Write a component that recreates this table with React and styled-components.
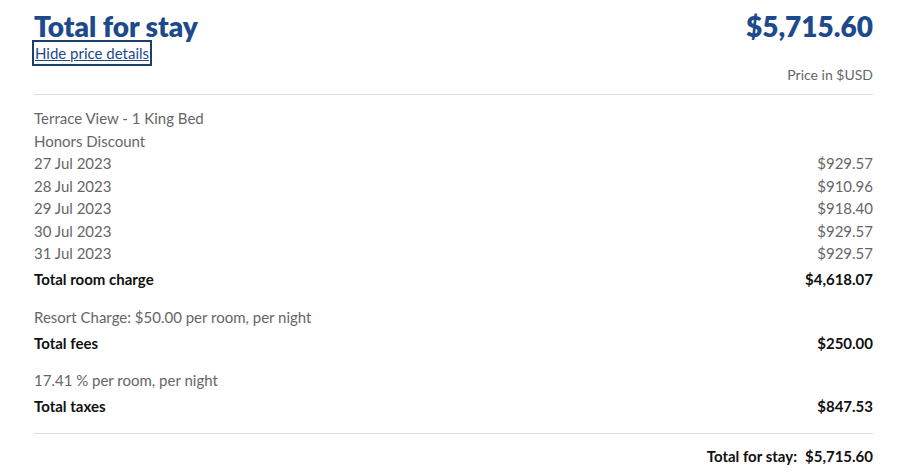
import styled, { createGlobalStyle } from "styled-components";

const GlobalStyle = createGlobalStyle`
  body {
    margin: 0;
    background: #fff;
    font-family: "Lato", "Liberation Sans", sans-serif;
  }
`

const Page = styled.div`
  padding: 13px 25px 0 34px;
`

const Header = styled.div`
  display: flex;
  justify-content: space-between;
  align-items: flex-start;
`

const Title = styled.h1`
  margin: 0;
  font-size: 28px;
  line-height: 27px;
  font-weight: 800;
  color: #1d4a8c;
`

const Amount = styled(Title)`
  text-align: right;
`

const HideLink = styled.a`
  display: inline-block;
  margin-left: -2px;
  padding: 1px 1px;
  border: 2px solid #1d3f6e;
  color: #1d4a8c;
  font-size: 15px;
  line-height: 20px;
  text-decoration: underline;
  cursor: pointer;
`

const Currency = styled.div`
  text-align: right;
  color: #666;
  font-size: 14px;
  line-height: 20px;
  margin-top: -1px;
`

const Divider = styled.hr`
  margin: ${(p) => p.$top}px 0 ${(p) => p.$bottom}px;
  border: none;
  border-top: 1px solid #ddd;
`

const Section = styled.div`
  margin-bottom: 15px;
`

const Row = styled.div`
  display: flex;
  justify-content: space-between;
  font-size: 15px;
  line-height: 22.5px;
  color: ${(p) => (p.$bold ? "#111" : "#666")};
  font-weight: ${(p) => (p.$bold ? 700 : 400)};
  margin-top: ${(p) => (p.$bold ? 3.5 : 0)}px;
`

const Footer = styled.div`
  display: flex;
  justify-content: flex-end;
  gap: 8px;
  font-size: 15px;
  line-height: 22px;
  font-weight: 700;
  color: #111;
`

const nights = [
  ["27 Jul 2023", "$929.57"],
  ["28 Jul 2023", "$910.96"],
  ["29 Jul 2023", "$918.40"],
  ["30 Jul 2023", "$929.57"],
  ["31 Jul 2023", "$929.57"],
]

export default function App() {
  return (
    <Page>
      <GlobalStyle />
      <Header>
        <div>
          <Title>Total for stay</Title>
          <HideLink>Hide price details</HideLink>
        </div>
        <Amount>$5,715.60</Amount>
      </Header>
      <Currency>Price in $USD</Currency>
      <Divider $top={9} $bottom={12} />
      <Section>
        <Row><span>Terrace View - 1 King Bed</span></Row>
        <Row><span>Honors Discount</span></Row>
        {nights.map(([d, p]) => (
          <Row key={d}><span>{d}</span><span>{p}</span></Row>
        ))}
        <Row $bold><span>Total room charge</span><span>$4,618.07</span></Row>
      </Section>
      <Section>
        <Row><span>Resort Charge: $50.00 per room, per night</span></Row>
        <Row $bold><span>Total fees</span><span>$250.00</span></Row>
      </Section>
      <Section>
        <Row><span>17.41 % per room, per night</span></Row>
        <Row $bold><span>Total taxes</span><span>$847.53</span></Row>
      </Section>
      <Divider $top={1} $bottom={11} />
      <Footer><span>Total for stay:</span><span>$5,715.60</span></Footer>
    </Page>
  );
}
